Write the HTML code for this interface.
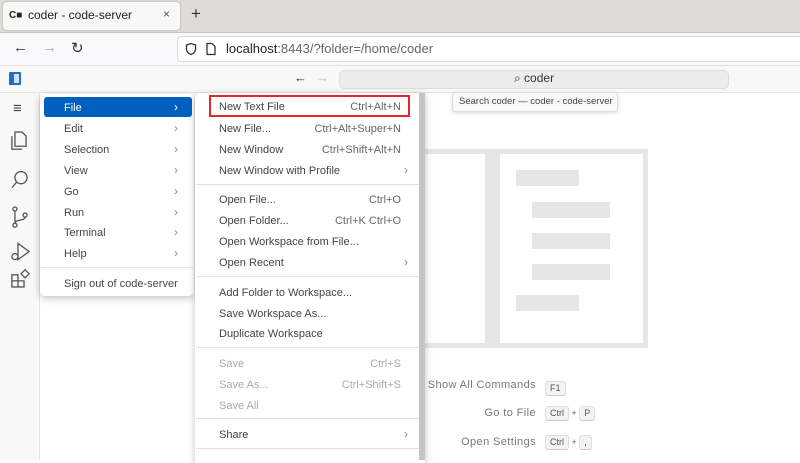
<!DOCTYPE html>
<html><head><meta charset="utf-8"><style>
*{box-sizing:border-box;margin:0;padding:0}
body{width:800px;height:460px;overflow:hidden;position:relative;background:#fff;font-family:"Liberation Sans","DejaVu Sans",sans-serif;color:#333}
.abs{position:absolute}
.tabbar{left:0;top:0;width:800px;height:33px;background:#dfdcd7;border-bottom:1px solid #c8c5c0}
.tab{left:3px;top:2px;width:177px;height:28px;background:#f8f8f8;border-radius:4px;box-shadow:0 0 2px rgba(0,0,0,.25)}
.nav{left:0;top:33px;width:800px;height:33px;background:#f9f9fb;border-bottom:1px solid #ddd}
.url{left:177px;top:36px;width:630px;height:26px;background:#fff;border:1px solid #ddd;border-radius:4px}
.title{left:0;top:66px;width:800px;height:27px;background:#f8f8f8;border-bottom:1px solid #e5e5e5}
.act{left:0;top:93px;width:40px;height:367px;background:#f8f8f8;border-right:1px solid #e5e5e5}
.menu{background:#fff;border-radius:5px;box-shadow:0 2px 8px rgba(0,0,0,.25)}
.it{position:absolute;height:21px;line-height:21px;font-size:11px;color:#444;white-space:nowrap;margin-top:2px}
.sc{position:absolute;height:21px;line-height:21px;font-size:11px;color:#666;white-space:nowrap;right:399px;text-align:right;margin-top:2px}
.sep{position:absolute;height:1px;background:#e0e0e0}
.chev{position:absolute;color:#888;font-size:12px;margin-top:1px}
.dis{color:#aaa !important}
.wm{background:#e6e6e6}
.kb{display:inline-block;background:#f3f3f3;border:1px solid #ddd;border-bottom-color:#ccc;border-radius:3px;font-size:9px;padding:1px 4px;color:#555;line-height:11px}
.hint{font-size:11px;color:#777;letter-spacing:.4px;white-space:nowrap}
</style></head><body>
<div class="abs tabbar"></div>
<div class="abs tab"></div>
<div class="abs" style="left:9px;top:10px;font-size:10px;font-weight:bold;color:#222">C■</div>
<div class="abs" style="left:28px;top:8px;font-size:12px;color:#222">coder - code-server</div>
<div class="abs" style="left:163px;top:7px;font-size:12px;color:#555">×</div>
<div class="abs" style="left:191px;top:4px;font-size:17px;color:#333">+</div>
<div class="abs nav"></div>
<div class="abs" style="left:13px;top:39px;font-size:15px;color:#333">←</div>
<div class="abs" style="left:42px;top:39px;font-size:15px;color:#aaa">→</div>
<div class="abs" style="left:71px;top:39px;font-size:15px;color:#333">↻</div>
<div class="abs url"></div>
<svg class="abs" style="left:184px;top:42px" width="14" height="14" viewBox="0 0 14 14"><path d="M7 1.5L2.5 3v4c0 3 2.5 4.8 4.5 5.5 2-.7 4.5-2.5 4.5-5.5V3z" fill="none" stroke="#333" stroke-width="1.3"/></svg>
<svg class="abs" style="left:205px;top:42px" width="12" height="14" viewBox="0 0 12 14"><path d="M2 1.5h5l3 3v8H2z" fill="none" stroke="#333" stroke-width="1.3"/></svg>
<div class="abs" style="left:226px;top:41px;font-size:13px;color:#222">localhost<span style="color:#666">:8443/?folder=/home/coder</span></div>
<div class="abs title"></div>
<div class="abs" style="left:9px;top:72px;width:12px;height:13px;background:#1f6fc5;border-radius:1px"></div>
<div class="abs" style="left:14px;top:74px;width:5px;height:9px;background:#cfe0f5"></div>
<div class="abs" style="left:294px;top:70px;font-size:13px;color:#333">←</div>
<div class="abs" style="left:316px;top:70px;font-size:13px;color:#bbb">→</div>
<div class="abs" style="left:339px;top:70px;width:390px;height:19px;background:#ececec;border:1px solid #ddd;border-radius:5px"></div>
<div class="abs" style="left:514px;top:71px;font-size:12px;color:#333">⌕ coder</div>
<div class="abs" style="left:452px;top:92px;width:166px;height:20px;background:#f8f8f8;border:1px solid #ddd;border-radius:3px;box-shadow:0 1px 4px rgba(0,0,0,.15);font-size:9.5px;line-height:18px;padding-left:6px;color:#444;white-space:nowrap">Search coder — coder - code-server</div>
<div class="abs act"></div>
<div class="abs" style="left:13px;top:100px;font-size:15px;color:#444">≡</div>
<svg class="abs" style="left:8px;top:128px" width="24" height="162" viewBox="0 0 22 160" fill="none" stroke="#555" stroke-width="1.3">
<path d="M6 4h7l4 4v10H6z M3 8v13h10"/>
<circle cx="12" cy="49" r="6"/><path d="M8 53l-5 6"/>
<circle cx="6" cy="80" r="2"/><circle cx="6" cy="96" r="2"/><circle cx="16" cy="86" r="2"/><path d="M6 82v12 M16 88c0 4-10 2-10 6"/>
<path d="M9 114v16l11-8z"/><circle cx="6" cy="127" r="3"/>
<path d="M3 157v-12h6v12z M3 151h12v6H3 M12 144l4-4 4 4-4 4z"/>
</svg>
<!-- watermark -->
<div class="abs wm" style="left:425px;top:149px;width:223px;height:199px"></div>
<div class="abs" style="left:425px;top:154px;width:60px;height:189px;background:#fff"></div>
<div class="abs" style="left:500px;top:154px;width:143px;height:189px;background:#fff"></div>
<div class="abs wm" style="left:516px;top:170px;width:63px;height:16px"></div>
<div class="abs wm" style="left:532px;top:202px;width:78px;height:16px"></div>
<div class="abs wm" style="left:532px;top:233px;width:78px;height:16px"></div>
<div class="abs wm" style="left:532px;top:264px;width:78px;height:16px"></div>
<div class="abs wm" style="left:516px;top:295px;width:63px;height:16px"></div>
<div class="abs hint" style="right:264px;top:379px">Show All Commands</div>
<div class="abs" style="left:545px;top:378px"><span class="kb">F1</span></div>
<div class="abs hint" style="right:264px;top:407px">Go to File</div>
<div class="abs" style="left:545px;top:406px;font-size:9px;color:#666"><span class="kb">Ctrl</span> + <span class="kb">P</span></div>
<div class="abs hint" style="right:264px;top:436px">Open Settings</div>
<div class="abs" style="left:545px;top:435px;font-size:9px;color:#666"><span class="kb">Ctrl</span> + <span class="kb">,</span></div>
<!-- menu 1 -->
<div class="abs menu" style="left:40px;top:94px;width:154px;height:202px"></div>
<div class="abs" style="left:44px;top:97px;width:148px;height:20px;background:#0060c0;border-radius:3px"></div>
<div class="it" style="left:64px;top:96px;color:#fff">File</div><div class="chev" style="left:174px;top:99px;color:#fff">›</div>
<div class="it" style="left:64px;top:117px">Edit</div><div class="chev" style="left:174px;top:120px">›</div>
<div class="it" style="left:64px;top:138px">Selection</div><div class="chev" style="left:174px;top:141px">›</div>
<div class="it" style="left:64px;top:159px">View</div><div class="chev" style="left:174px;top:162px">›</div>
<div class="it" style="left:64px;top:180px">Go</div><div class="chev" style="left:174px;top:183px">›</div>
<div class="it" style="left:64px;top:201px">Run</div><div class="chev" style="left:174px;top:204px">›</div>
<div class="it" style="left:64px;top:221px">Terminal</div><div class="chev" style="left:174px;top:224px">›</div>
<div class="it" style="left:64px;top:242px">Help</div><div class="chev" style="left:174px;top:245px">›</div>
<div class="sep" style="left:41px;top:267px;width:152px"></div>
<div class="it" style="left:64px;top:272px">Sign out of code-server</div>
<!-- menu 2 -->
<div class="abs menu" style="left:195px;top:93px;width:230px;height:370px;border-radius:5px 0 0 0"></div>
<div class="abs" style="left:419px;top:93px;width:6px;height:367px;background:#c4c4c4"></div>
<div class="abs" style="left:209px;top:95px;width:201px;height:22px;border:2px solid #e5262b"></div>
<div class="it" style="left:219px;top:95px">New Text File</div><div class="sc" style="top:95px">Ctrl+Alt+N</div>
<div class="it" style="left:219px;top:117px">New File...</div><div class="sc" style="top:117px">Ctrl+Alt+Super+N</div>
<div class="it" style="left:219px;top:138px">New Window</div><div class="sc" style="top:138px">Ctrl+Shift+Alt+N</div>
<div class="it" style="left:219px;top:159px">New Window with Profile</div><div class="chev" style="left:404px;top:162px">›</div>
<div class="sep" style="left:196px;top:184px;width:223px"></div>
<div class="it" style="left:219px;top:188px">Open File...</div><div class="sc" style="top:188px">Ctrl+O</div>
<div class="it" style="left:219px;top:209px">Open Folder...</div><div class="sc" style="top:209px">Ctrl+K Ctrl+O</div>
<div class="it" style="left:219px;top:230px">Open Workspace from File...</div>
<div class="it" style="left:219px;top:251px">Open Recent</div><div class="chev" style="left:404px;top:254px">›</div>
<div class="sep" style="left:196px;top:276px;width:223px"></div>
<div class="it" style="left:219px;top:281px">Add Folder to Workspace...</div>
<div class="it" style="left:219px;top:302px">Save Workspace As...</div>
<div class="it" style="left:219px;top:322px">Duplicate Workspace</div>
<div class="sep" style="left:196px;top:347px;width:223px"></div>
<div class="it dis" style="left:219px;top:352px">Save</div><div class="sc dis" style="top:352px">Ctrl+S</div>
<div class="it dis" style="left:219px;top:373px">Save As...</div><div class="sc dis" style="top:373px">Ctrl+Shift+S</div>
<div class="it dis" style="left:219px;top:394px">Save All</div>
<div class="sep" style="left:196px;top:418px;width:223px"></div>
<div class="it" style="left:219px;top:423px">Share</div><div class="chev" style="left:404px;top:426px">›</div>
<div class="sep" style="left:196px;top:448px;width:223px"></div>
</body></html>
